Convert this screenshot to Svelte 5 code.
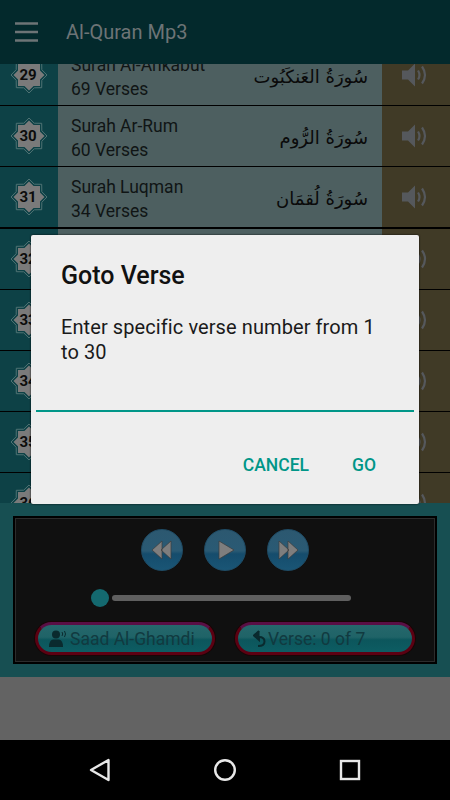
<script>
  const rows = [
    { n: 29, en: 'Surah Al-Ankabut', v: 69, ar: 'سُورَةُ العَنكَبُوت' },
    { n: 30, en: 'Surah Ar-Rum', v: 60, ar: 'سُورَةُ الرُّوم' },
    { n: 31, en: 'Surah Luqman', v: 34, ar: 'سُورَةُ لُقمَان' },
    { n: 32, en: 'Surah As-Sajdah', v: 30, ar: 'سُورَةُ السَّجدَة' },
    { n: 33, en: 'Surah Al-Ahzab', v: 73, ar: 'سُورَةُ الأَحزَاب' },
    { n: 34, en: 'Surah Saba', v: 54, ar: 'سُورَةُ سَبَأ' },
    { n: 35, en: 'Surah Fatir', v: 45, ar: 'سُورَةُ فَاطِر' },
    { n: 36, en: 'Surah Ya-Sin', v: 83, ar: 'سُورَةُ يس' }
  ];
</script>

<div class="phone">
  <div class="screen">
    <header class="bar">
      <svg class="menu" width="24" height="20" viewBox="0 0 24 20"><path d="M0 1.500h23M0 10h23M0 18.500h23" stroke="#6d7476" stroke-width="2.400" fill="none"/></svg>
      <span class="title">Al-Quran Mp3</span>
    </header>

    <div class="list">
      <div class="scroller">
        {#each rows as r}
          <div class="row">
            <div class="num">
              <svg class="star" width="38" height="38" viewBox="-19 -19 38 38">
                <path d="M0-18 5.300-12.800 12.700-12.700 12.800-5.300 18 0 12.800 5.300 12.700 12.700 5.300 12.800 0 18-5.300 12.800-12.700 12.700-12.800 5.300-18 0-12.800-5.300-12.700-12.700-5.300-12.800Z" fill="#0d4146" stroke="#4f7374" stroke-width="1"/>
                <path d="M0-15.500 4.600-11 11-11 11-4.600 15.500 0 11 4.600 11 11 4.600 11 0 15.500-4.600 11-11 11-11 4.600-15.500 0-11-4.600-11-11-4.600-11Z" fill="#7a7a7a"/>
              </svg>
              <span class="n">{r.n}</span>
            </div>
            <div class="mid">
              <div class="names">
                <div>{r.en}</div>
                <div>{r.v} Verses</div>
              </div>
              <div class="ar" dir="rtl">{r.ar}</div>
            </div>
            <div class="spk">
              <svg width="27" height="24" viewBox="0 0 27 24">
                <path d="M0 7.500h6l7-7v23l-7-7H0Z" fill="#55585c"/>
                <path d="M16 7.500q3 4.500 0 9M20 3.500q6 8.500 0 17" stroke="#55585c" stroke-width="2.200" fill="none"/>
              </svg>
            </div>
          </div>
        {/each}
      </div>
    </div>

    <section class="player">
      <div class="box">
        <div class="controls">
          <button class="round" aria-label="Previous">
            <svg width="22" height="22" viewBox="0 0 22 22"><path d="M11 2v18L1 11ZM20 2v18L10 11Z" fill="#7e7e7e" stroke="#3c3c3c" stroke-width=".7"/></svg>
          </button>
          <button class="round" aria-label="Play">
            <svg width="22" height="22" viewBox="0 0 22 22"><path d="M5 2v18l15-9Z" fill="#7e7e7e" stroke="#3c3c3c" stroke-width=".7"/></svg>
          </button>
          <button class="round" aria-label="Next">
            <svg width="22" height="22" viewBox="0 0 22 22"><path d="M2 2v18l10-9ZM11 2v18l10-9Z" fill="#7e7e7e" stroke="#3c3c3c" stroke-width=".7"/></svg>
          </button>
        </div>
        <div class="slider">
          <span class="thumb"></span>
          <span class="track"></span>
        </div>
        <div class="pills">
          <div class="pill">
            <svg width="18" height="18" viewBox="0 0 18 18"><circle cx="7" cy="4.500" r="4" fill="#0a2a2e"/><path d="M0 17q0-7 4-7.500h6q4 .5 4 7.500Z" fill="#0a2a2e"/><path d="M13 2q1.500 2 0 4M15.500 1q2 3 0 6" stroke="#0a2a2e" fill="none"/></svg>
            <span>Saad Al-Ghamdi</span>
          </div>
          <div class="pill second">
            <svg width="14" height="18" viewBox="0 0 14 18"><path d="M6 1 1 5.500 6 10V7q5.500 0 5.500 4.500T5 16" stroke="#0a2a2e" stroke-width="2" fill="none"/><path d="M6.500 1 0.500 5.500 6.500 10Z" fill="#0a2a2e"/></svg>
            <span>Verse: 0 of 7</span>
          </div>
        </div>
      </div>
    </section>
    <div class="foot"></div>
  </div>

  <nav class="nav">
    <svg width="22" height="24" viewBox="0 0 22 24"><path d="M19.500 2v20L2 12Z" fill="none" stroke="#e8e8e8" stroke-width="2.400" stroke-linejoin="round"/></svg>
    <svg width="24" height="24" viewBox="0 0 24 24"><circle cx="12" cy="12" r="9.800" fill="none" stroke="#e8e8e8" stroke-width="2.400"/></svg>
    <svg width="22" height="22" viewBox="0 0 22 22"><rect x="2" y="2" width="18" height="18" fill="none" stroke="#e8e8e8" stroke-width="2.400"/></svg>
  </nav>

  <div class="dialog">
    <h2>Goto Verse</h2>
    <p>Enter specific verse number from 1 to 30</p>
    <div class="field"></div>
    <div class="actions">
      <button class="act">CANCEL</button>
      <button class="act">GO</button>
    </div>
  </div>
</div>

<style>
  :global(body) { margin: 0; background: #000; }
  .phone { position: relative; width: 450px; height: 800px; overflow: hidden; font-family: Roboto, sans-serif; }
  .screen { height: 740px; display: flex; flex-direction: column; }
  .bar { height: 64px; flex: none; background: #03292c; display: flex; align-items: center; box-sizing: border-box; padding-left: 15px; position: relative; z-index: 1; }
  .menu { margin-right: 27px; }
  .title { color: #6d7476; font-size: 20px; font-weight: 400; }
  .list { height: 439px; flex: none; overflow: hidden; background: #000; }
  .scroller { margin-top: -19px; }
  .row { height: 60px; margin-bottom: 1.200px; display: flex; background: #000; }
  .num { width: 58px; flex: none; background: #0d4146; position: relative; display: flex; align-items: center; justify-content: center; }
  .star { position: absolute; left: 10px; top: 11px; }
  .n { position: relative; font-size: 15px; font-weight: 700; color: #0c0c0c; left: -1px; }
  .mid { width: 324px; flex: none; background: #4d5f60; display: flex; align-items: center; justify-content: space-between; box-sizing: border-box; padding: 0 14px 0 13px; }
  .names { font-size: 17.500px; line-height: 24px; color: #101515; padding-top: 3px; }
  .ar { font-family: "DejaVu Sans", sans-serif; font-size: 18px; color: #0a0a0a; white-space: nowrap; padding-top: 2px; }
  .spk { flex: 1; background: #403a26; display: flex; align-items: center; padding-left: 20px; }
  .player { height: 174px; flex: none; background: #174f52; box-sizing: border-box; padding: 13px; }
  .box { height: 148px; box-sizing: border-box; background: #101010; border: 2px solid #000; outline: 1px solid #2c2c2c; outline-offset: -3px; display: flex; flex-direction: column; align-items: center; padding-top: 11px; }
  .controls { display: flex; gap: 21px; }
  .round { width: 42px; height: 42px; padding: 0; border: 1px solid #1f4c66; box-sizing: border-box; border-radius: 50%; background: linear-gradient(#2c5870 0%, #2a5a74 52%, #154c6c 60%, #1a5676 100%); display: flex; align-items: center; justify-content: center; }
  .slider { display: flex; align-items: center; margin-top: 18px; gap: 3px; width: 260px; margin-left: -8px; }
  .thumb { width: 18px; height: 18px; border-radius: 50%; background: #14696f; flex: none; }
  .track { flex: 1; height: 6px; border-radius: 3px; background: #5f5f5f; }
  .pills { display: flex; gap: 20px; margin-top: 15px; }
  .pill { width: 180px; height: 33px; box-sizing: border-box; border-radius: 17px; border: 3px solid #5c0012; border-top-color: #5a0f45; background: linear-gradient(#26686c 0%, #1f6367 45%, #0c565c 55%, #0d5d63 100%); display: flex; align-items: center; gap: 3px; padding: 1px 0 0 11px; color: #113a40; font-size: 17.500px; box-shadow: 0 0 0 1px #1a0505; }
  .second { padding-left: 15px; gap: 1px; }
  .foot { flex: 1; background: #636363; }
  .nav { height: 60px; background: #000; display: flex; align-items: center; }
  .nav svg:nth-child(1) { margin-left: 89px; }
  .nav svg:nth-child(2) { margin-left: 102px; }
  .nav svg:nth-child(3) { margin-left: 102px; }
  .dialog { position: absolute; left: 31px; top: 235px; width: 388px; height: 269px; box-sizing: border-box; background: #eeeeee; border-radius: 2px; padding: 24px 5px 0; box-shadow: 0 0 2px #000; display: flex; flex-direction: column; }
  h2 { margin: 0 25px; font-size: 25px; line-height: 34px; font-weight: 500; color: #111; }
  p { margin: 22px 25px 0; font-size: 20px; line-height: 25px; letter-spacing: .09px; color: #1a1a1a; }
  .field { height: 2px; background: #009688; margin-top: 45px; }
  .actions { display: flex; justify-content: flex-end; margin-top: 41px; gap: 43px; padding-right: 38px; }
  .act { padding: 0; border: 0; background: none; font: 500 17.500px Roboto, sans-serif; color: #009688; line-height: 24px; }
</style>
